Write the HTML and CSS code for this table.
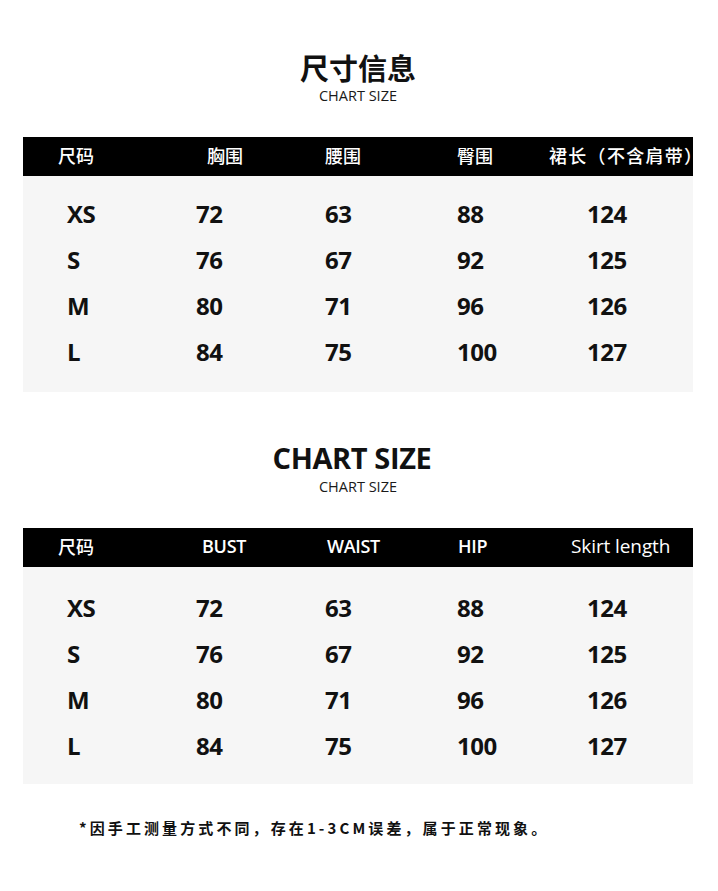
FILE: index.html
```html
<!DOCTYPE html>
<html lang="zh">
<head>
<meta charset="utf-8">
<title>尺寸信息</title>
<link rel="stylesheet" href="styles.css">
</head>
<body>
<main class="page">
  <section class="block block-zh">
    <h1 class="title title-zh">尺寸信息</h1>
    <p class="subtitle">CHART SIZE</p>
    <div class="table">
      <div class="thead thead-zh">
        <span>尺码</span><span>胸围</span><span>腰围</span><span>臀围</span><span class="wide">裙长（不含肩带）</span>
      </div>
      <div class="tbody">
        <div class="row"><span>XS</span><span>72</span><span>63</span><span>88</span><span>124</span></div>
        <div class="row"><span>S</span><span>76</span><span>67</span><span>92</span><span>125</span></div>
        <div class="row"><span>M</span><span>80</span><span>71</span><span>96</span><span>126</span></div>
        <div class="row"><span>L</span><span>84</span><span>75</span><span>100</span><span>127</span></div>
      </div>
    </div>
  </section>

  <section class="block block-en">
    <h2 class="title title-en">CHART SIZE</h2>
    <p class="subtitle">CHART SIZE</p>
    <div class="table">
      <div class="thead thead-en">
        <span class="zh">尺码</span><span>BUST</span><span>WAIST</span><span>HIP</span><span class="skirt">Skirt length</span>
      </div>
      <div class="tbody tbody-en">
        <div class="row"><span>XS</span><span>72</span><span>63</span><span>88</span><span>124</span></div>
        <div class="row"><span>S</span><span>76</span><span>67</span><span>92</span><span>125</span></div>
        <div class="row"><span>M</span><span>80</span><span>71</span><span>96</span><span>126</span></div>
        <div class="row"><span>L</span><span>84</span><span>75</span><span>100</span><span>127</span></div>
      </div>
    </div>
  </section>

  <p class="note">*因手工测量方式不同，存在1-3CM误差，属于正常现象。</p>
</main>
</body>
</html>
```

FILE: styles.css
```css
* { box-sizing: border-box; }

html, body {
  margin: 0;
  padding: 0;
  background: #ffffff;
}

body {
  font-family: "Open Sans", "Noto Sans CJK SC", sans-serif;
  color: #111111;
}

.page {
  width: 718px;
  padding: 50px 25px 0 23px;
}

.block {
  display: flex;
  flex-direction: column;
  align-items: stretch;
}

.block-en {
  margin-top: 49px;
}

.title {
  margin: 0;
  text-align: center;
  font-weight: 700;
  line-height: 34px;
  color: #111;
}

.title-zh {
  font-family: "Noto Sans CJK SC", sans-serif;
  font-size: 29px;
}

.title-en {
  font-family: "Open Sans", sans-serif;
  font-size: 29px;
  letter-spacing: -0.4px;
  padding-right: 12px;
}

.subtitle {
  margin: 3px 0 0;
  text-align: center;
  font-family: "Open Sans", sans-serif;
  font-size: 14.5px;
  line-height: 18px;
  color: #1a1a1a;
}

.table {
  margin-top: 32px;
  width: 670px;
}

.thead {
  display: grid;
  height: 39px;
  align-items: center;
  padding-bottom: 3px;
  background: #000;
  color: #fff;
  font-size: 18px;
  white-space: nowrap;
  overflow: hidden;
}

.thead-zh {
  font-family: "Noto Sans CJK SC", sans-serif;
  font-weight: 500;
  grid-template-columns: 149px 118px 132px 92px 144px;
  padding-left: 35px;
}

.thead-zh .wide {
  letter-spacing: 1.3px;
}

.thead-en {
  font-family: "Open Sans", sans-serif;
  font-weight: 600;
  font-size: 18px;
  letter-spacing: -0.3px;
  grid-template-columns: 144px 125px 131px 113px 120px;
  padding-left: 35px;
}

.thead-en .zh {
  font-family: "Noto Sans CJK SC", sans-serif;
  font-weight: 500;
  letter-spacing: 0;
}

.thead-en .skirt {
  font-weight: 500;
  font-size: 19px;
  letter-spacing: -0.1px;
}

.tbody {
  background: #f6f6f6;
  padding: 14px 0 18px 44px;
}

.tbody-en {
  padding-top: 17px;
  padding-bottom: 16px;
}

.row {
  display: grid;
  grid-template-columns: 129px 129px 132px 130px 100px;
  height: 46px;
  align-items: center;
  font-family: "Open Sans", sans-serif;
  font-weight: 700;
  font-size: 24px;
  letter-spacing: -0.5px;
  color: #111;
}

.note {
  margin: 34px 0 0 56px;
  font-family: "Noto Sans CJK SC", sans-serif;
  font-weight: 700;
  font-size: 15px;
  line-height: 20px;
  letter-spacing: 3.1px;
  color: #111;
}
```
